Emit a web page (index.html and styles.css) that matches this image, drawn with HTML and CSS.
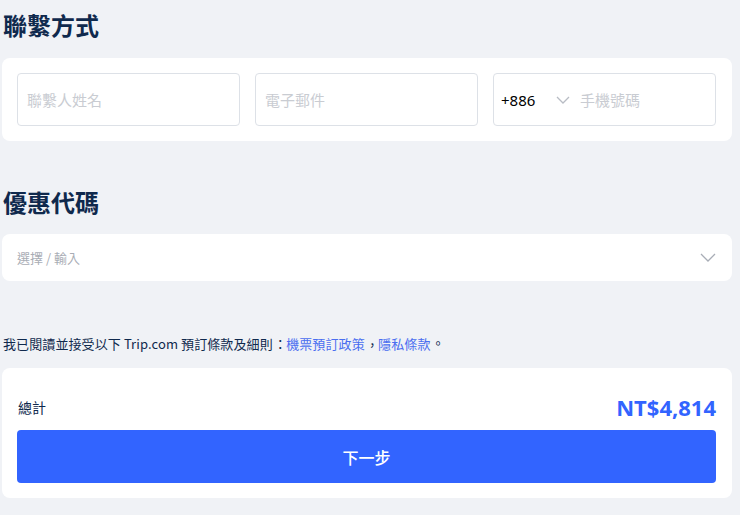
FILE: index.html
```html
<!DOCTYPE html>
<html lang="zh-Hant">
<head>
<meta charset="utf-8">
<title>聯繫方式</title>
<link rel="stylesheet" href="styles.css">
</head>
<body>
<div class="page">
  <h2 class="title">聯繫方式</h2>
  <section class="card contact">
    <input class="field" type="text" placeholder="聯繫人姓名">
    <input class="field" type="email" placeholder="電子郵件">
    <div class="field phone">
      <span class="code">+886</span>
      <svg class="chev small" viewBox="0 0 14 8" width="14" height="8"><path d="M1 1l6 6 6-6" fill="none" stroke="#b8bcc4" stroke-width="1.3"/></svg>
      <input class="phone-input" type="tel" placeholder="手機號碼">
    </div>
  </section>

  <h2 class="title second">優惠代碼</h2>
  <section class="card promo">
    <span class="promo-text">選擇 / 輸入</span>
    <svg class="chev" viewBox="0 0 16 9" width="16" height="9"><path d="M1 1l7 7 7-7" fill="none" stroke="#a8adb6" stroke-width="1.3"/></svg>
  </section>

  <p class="terms">我已閱讀並接受以下 Trip.com 預訂條款及細則<span class="punct">：</span><a href="#">機票預訂政策</a><span class="punct comma">，</span><a href="#">隱私條款</a><span class="punct stop">。</span></p>

  <section class="card total">
    <div class="total-row">
      <span class="total-label">總計</span>
      <span class="price">NT$4,814</span>
    </div>
    <button class="next" type="button">下一步</button>
  </section>
</div>
</body>
</html>
```

FILE: styles.css
```css
* { box-sizing: border-box; }
html, body {
  margin: 0;
  padding: 0;
  background: #f0f2f6;
}
body {
  font-family: "Noto Sans", "Noto Sans CJK TC", sans-serif;
  color: #0f294d;
}
.page {
  width: 732px;
  padding-left: 2px;
}
.title {
  margin: 10px 0 18px 1px;
  font-size: 24px;
  line-height: 30px;
  font-weight: 700;
  color: #0f294d;
  font-family: "Noto Sans CJK TC", sans-serif;
}
.title.second {
  margin-top: 46px;
  margin-bottom: 17px;
}
.card {
  background: #ffffff;
  border-radius: 8px;
}
.contact {
  display: grid;
  grid-template-columns: repeat(3, minmax(0, 1fr));
  gap: 15px;
  padding: 15px 16px 15px 15px;
}
.field {
  height: 53px;
  border: 1px solid #dde1e7;
  border-radius: 4px;
  padding: 0 9px;
  font-family: "Noto Sans CJK TC", sans-serif;
  font-size: 15px;
  color: #0f294d;
  background: #fff;
  outline: none;
  width: 100%;
  min-width: 0;
}
.field::placeholder, .phone-input::placeholder {
  color: #c9ccd2;
}
.phone {
  display: flex;
  align-items: center;
  padding-left: 7px;
}
.code {
  font-family: "Noto Sans", sans-serif;
  font-size: 15px;
  color: #000;
  width: 55px;
  flex: none;
}
.chev.small {
  flex: none;
  margin-right: 10px;
}
.phone-input {
  border: none;
  outline: none;
  flex: 1;
  min-width: 0;
  padding: 0;
  font-family: "Noto Sans CJK TC", sans-serif;
  font-size: 15px;
  background: transparent;
}
.promo {
  height: 47px;
  display: flex;
  align-items: center;
  justify-content: space-between;
  padding: 0 16px 0 15px;
}
.promo-text {
  font-family: "Noto Sans CJK TC", sans-serif;
  font-size: 13px;
  color: #a9adb5;
}
.terms {
  margin: 54px 0 15px 1px;
  font-family: "Noto Sans CJK TC", sans-serif;
  font-size: 13px;
  line-height: 18px;
  color: #0f294d;
  letter-spacing: 0.1px;
}
.terms .punct {
  font-feature-settings: "halt" 1;
  padding: 0 0.2em 0 0.32em;
}
.terms .punct.comma {
  position: relative;
  top: 1px;
}
.terms .punct.stop {
  position: relative;
  top: -1px;
}
.terms a {
  color: #4a6ef0;
  text-decoration: none;
}
.total {
  padding: 15px 16px 15px 15px;
}
.total-row {
  height: 47px;
  display: flex;
  align-items: center;
  justify-content: space-between;
  padding-left: 1px;
}
.total-label {
  font-family: "Noto Sans CJK TC", sans-serif;
  font-size: 14px;
  color: #0f294d;
}
.price {
  font-family: "Noto Sans", sans-serif;
  font-size: 22px;
  font-weight: 700;
  color: #3264ff;
}
.next {
  display: block;
  width: 100%;
  height: 53px;
  border: none;
  border-radius: 4px;
  background: #3264ff;
  color: #fff;
  font-family: "Noto Sans CJK TC", sans-serif;
  font-size: 16px;
  font-weight: 500;
  cursor: pointer;
}
```
